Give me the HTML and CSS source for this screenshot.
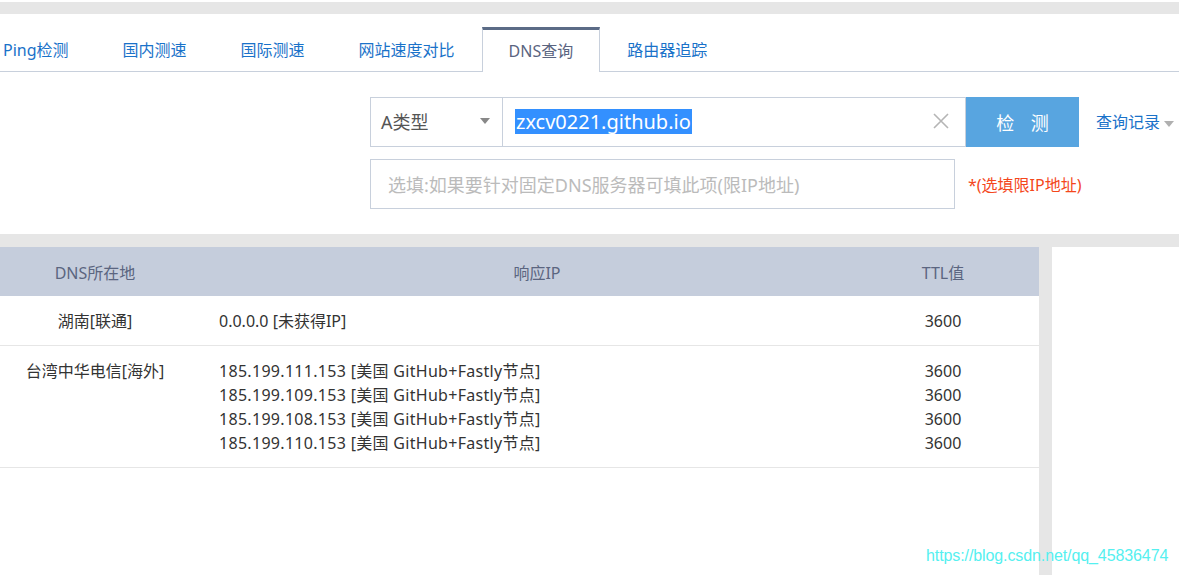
FILE: index.html
```html
<!DOCTYPE html>
<html lang="zh">
<head>
  <meta charset="UTF-8">
  <title>DNS查询</title>
  <link rel="stylesheet" href="styles.css">
</head>
<body>
  <div class="topbar"></div>

  <ul class="tabs">
    <li>Ping检测</li>
    <li>国内测速</li>
    <li>国际测速</li>
    <li>网站速度对比</li>
    <li class="active">DNS查询</li>
    <li>路由器追踪</li>
  </ul>

  <div class="query">
    <div class="row">
      <div class="select">
        <span>A类型</span>
        <i class="caret"></i>
      </div>
      <div class="host">
        <span class="sel">zxcv0221.github.io</span>
        <svg class="clear" width="16" height="16" viewBox="0 0 16 16">
          <path d="M1 1 L15 15 M15 1 L1 15" stroke="#b5b5b5" stroke-width="1.6" fill="none"/>
        </svg>
      </div>
      <button class="btn">检 测</button>
      <a class="history">查询记录<i class="caret small"></i></a>
    </div>
    <div class="row">
      <div class="server">选填:如果要针对固定DNS服务器可填此项(限IP地址)</div>
      <span class="note">*(选填限IP地址)</span>
    </div>
  </div>

  <div class="band"></div>

  <div class="result">
    <div class="table">
      <div class="thead">
        <div>DNS所在地</div>
        <div>响应IP</div>
        <div>TTL值</div>
      </div>
      <div class="tr">
        <div class="loc">湖南[联通]</div>
        <div class="ip">0.0.0.0 [未获得IP]</div>
        <div class="ttl">3600</div>
      </div>
      <div class="tr">
        <div class="loc">台湾中华电信[海外]</div>
        <div class="ip wide">
          185.199.111.153 [美国 GitHub+Fastly节点]<br>
          185.199.109.153 [美国 GitHub+Fastly节点]<br>
          185.199.108.153 [美国 GitHub+Fastly节点]<br>
          185.199.110.153 [美国 GitHub+Fastly节点]
        </div>
        <div class="ttl">3600<br>3600<br>3600<br>3600</div>
      </div>
    </div>
    <div class="gutter"></div>
    <div class="side"></div>
  </div>

  <div class="watermark">https://blog.csdn.net/qq_45836474</div>
</body>
</html>
```

FILE: styles.css
```css
* { box-sizing: border-box; }
html, body { height: 100%; }
body {
  margin: 0;
  overflow: hidden;
  position: relative;
  font-family: "Noto Sans", "Noto Sans CJK SC", sans-serif;
  font-size: 16px;
  color: #333;
  background: #fff;
}

.topbar { height: 12px; margin-top: 2px; background: #e6e6e6; }

/* 标签栏 */
.tabs {
  display: flex;
  list-style: none;
  margin: 0 0 0 -24px;
  padding: 13px 0 0;
  border-bottom: 1px solid #c8d0dc;
  height: 58px;
}
.tabs li {
  padding: 0 27px;
  height: 45px;
  line-height: 46px;
  color: #1a72c9;
  white-space: nowrap;
}
.tabs li.active {
  color: #5a6480;
  border-top: 3px solid #5b6b86;
  border-left: 1px solid #c8d0dc;
  border-right: 1px solid #c8d0dc;
  background: #fff;
  line-height: 42px;
  padding: 0 26px;
}

/* 查询表单 */
.query { padding: 25px 0 0 370px; height: 162px; }
.row { display: flex; align-items: center; margin-bottom: 12px; }

.select {
  width: 133px;
  height: 50px;
  border: 1px solid #c8d0dc;
  display: flex;
  align-items: center;
  justify-content: space-between;
  padding: 0 12px 2px 10px;
  font-size: 18px;
  color: #555;
}
.caret {
  display: inline-block;
  width: 0; height: 0;
  border-left: 5px solid transparent;
  border-right: 5px solid transparent;
  border-top: 6px solid #888;
}
.caret.small { border-top-color: #b0b0b0; margin-left: 4px; vertical-align: middle; }

.host {
  width: 463px;
  height: 50px;
  border: 1px solid #c8d0dc;
  border-left: 0;
  display: flex;
  align-items: center;
  justify-content: space-between;
  padding: 0 16px 2px 12px;
  font-size: 20px;
}
.sel { background: #3390ff; color: #fff; line-height: 25px; padding: 0 1px; }

.btn {
  width: 113px;
  height: 50px;
  border: 0;
  background: #58a5e0;
  color: #fff;
  font-family: inherit;
  font-size: 18px;
  word-spacing: 12px;
  padding-bottom: 2px;
}
.history { margin-left: 17px; margin-bottom: 2px; color: #1a72c9; font-size: 16px; }

.server {
  width: 585px;
  height: 50px;
  border: 1px solid #c8d0dc;
  display: flex;
  align-items: center;
  padding-left: 17px;
  font-size: 18px;
  color: #bbb;
}
.note { margin-left: 13px; color: #f4471c; font-size: 16px; }

.band { height: 13px; background: #e6e6e6; }

/* 结果表格 */
.result { display: flex; height: 328px; }
.table { width: 1039px; }
.gutter { width: 13px; background: #e6e6e6; }
.side { flex: 1; }

.thead, .tr {
  display: grid;
  grid-template-columns: 190px 694px 118px 37px;
}
.thead {
  height: 49px;
  align-items: center;
  background: #c5cddc;
  color: #5b6580;
  text-align: center;
}
.tr {
  padding: 13px 0 12px;
  line-height: 24px;
  border-bottom: 1px solid #e6e6e6;
}
.tr:first-of-type { padding-bottom: 13px; }
.loc { text-align: center; }
.ip { padding-left: 29px; }
.ip.wide { letter-spacing: 0.3px; }
.ttl { text-align: center; }

.watermark {
  position: absolute;
  left: 926px;
  top: 547px;
  font-family: "Liberation Sans", Arial, sans-serif;
  font-size: 16px;
  letter-spacing: -0.1px;
  color: #55f0f0;
}
```
